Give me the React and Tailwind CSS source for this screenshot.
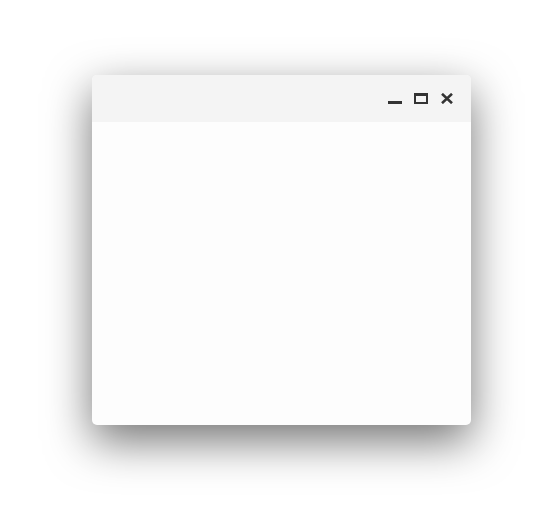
export default function App() {
  return (
    <div className="w-[542px] h-[522px] bg-white pt-[75px] pl-[92px]">
      <div className="w-[379px] h-[350px] rounded-[5px] bg-[#fdfdfd] overflow-hidden shadow-[0_16px_45px_rgba(0,0,0,0.55)] flex flex-col">
        <div className="h-[47px] bg-[#f4f4f4] flex items-center justify-end pr-[17px] gap-[12px]">
          <svg width="14" height="11" viewBox="0 0 14 11">
            <rect x="0" y="8" width="14" height="3" fill="#333" />
          </svg>
          <svg width="14" height="11" viewBox="0 0 14 11">
            <rect x="0" y="0" width="14" height="3" fill="#333" />
            <rect x="0" y="0" width="2" height="11" fill="#333" />
            <rect x="12" y="0" width="2" height="11" fill="#333" />
            <rect x="0" y="9" width="14" height="2" fill="#333" />
          </svg>
          <svg width="14" height="11" viewBox="0 0 14 11">
            <path d="M2 0.8 L12 10.2 M12 0.8 L2 10.2" stroke="#333" strokeWidth="2.6" />
          </svg>
        </div>
        <div className="flex-1" />
      </div>
    </div>
  );
}
